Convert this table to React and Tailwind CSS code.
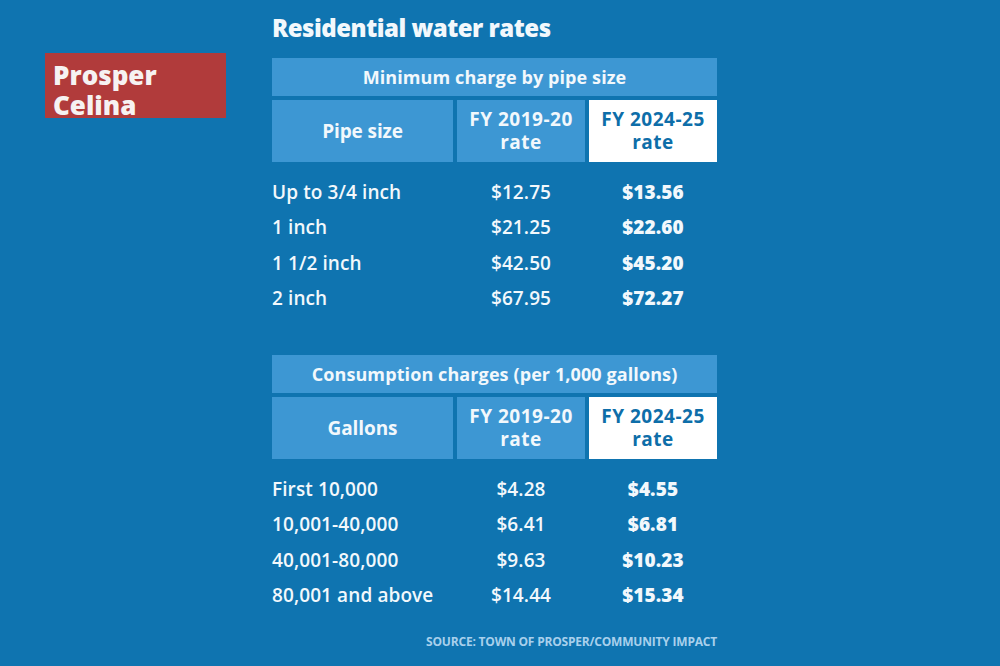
import React from "react";

const pipeRows = [
  ["Up to 3/4 inch", "$12.75", "$13.56"],
  ["1 inch", "$21.25", "$22.60"],
  ["1 1/2 inch", "$42.50", "$45.20"],
  ["2 inch", "$67.95", "$72.27"],
];

const gallonRows = [
  ["First 10,000", "$4.28", "$4.55"],
  ["10,001-40,000", "$6.41", "$6.81"],
  ["40,001-80,000", "$9.63", "$10.23"],
  ["80,001 and above", "$14.44", "$15.34"],
];

function RateTable({ title, firstCol, rows }) {
  return (
    <div className="flex flex-col">
      <div className="h-[38px] bg-[#3d97d3] flex items-center justify-center text-[18px] font-bold text-[#f2f8fc] tracking-[0.1px]">
        {title}
      </div>
      <div className="mt-[4px] grid grid-cols-[181px_128px_128px] gap-x-[4px] h-[62px]">
        <div className="bg-[#3d97d3] flex items-center justify-center text-[19px] font-bold text-[#f2f8fc] tracking-[-0.1px]">
          {firstCol}
        </div>
        <div className="bg-[#3d97d3] flex flex-col items-center justify-center text-[19px] font-bold text-[#f2f8fc] leading-[23px] tracking-[0.5px]">
          <span>FY 2019-20</span>
          <span>rate</span>
        </div>
        <div className="bg-white flex flex-col items-center justify-center text-[19px] font-bold text-[#0e6ea9] leading-[23px] tracking-[0.5px]">
          <span>FY 2024-25</span>
          <span>rate</span>
        </div>
      </div>
      <div className="mt-[12px] flex flex-col">
        {rows.map((r) => (
          <div key={r[0]} className="grid grid-cols-[181px_128px_128px] gap-x-[4px] h-[35.5px] items-center text-[19px] font-semibold text-[#f2f8fc] tracking-[0.1px]">
            <span>{r[0]}</span>
            <span className="text-center">{r[1]}</span>
            <span className="text-center font-extrabold">{r[2]}</span>
          </div>
        ))}
      </div>
    </div>
  );
}

export default function App() {
  return (
    <div
      className="w-[1000px] h-[666px] bg-[#0f74b0] flex"
      style={{ fontFamily: "'Open Sans', Lato, sans-serif" }}
    >
      <div className="w-[272px] pl-[45px] pt-[53px]">
        <div className="w-[181px] h-[65px] bg-[#b13b3b] pl-[8px] pt-[7px] text-[26px] font-extrabold leading-[30px] text-[#f6f2f2] tracking-[0px]">
          <div className="h-[30px]">Prosper</div>
          <div className="h-[28px]">Celina</div>
        </div>
      </div>
      <div className="w-[445px] flex flex-col pt-[12px]">
        <div className="text-[24px] font-extrabold leading-[32px] text-[#f2f8fc] tracking-[-0.5px]">
          Residential water rates
        </div>
        <div className="mt-[14px]">
          <RateTable title="Minimum charge by pipe size" firstCol="Pipe size" rows={pipeRows} />
        </div>
        <div className="mt-[39px]">
          <RateTable title="Consumption charges (per 1,000 gallons)" firstCol="Gallons" rows={gallonRows} />
        </div>
        <div className="mt-[20px] text-right text-[12px] font-bold text-[#a8d0ec] tracking-[-0.2px]">
          SOURCE: TOWN OF PROSPER/COMMUNITY IMPACT
        </div>
      </div>
    </div>
  );
}
